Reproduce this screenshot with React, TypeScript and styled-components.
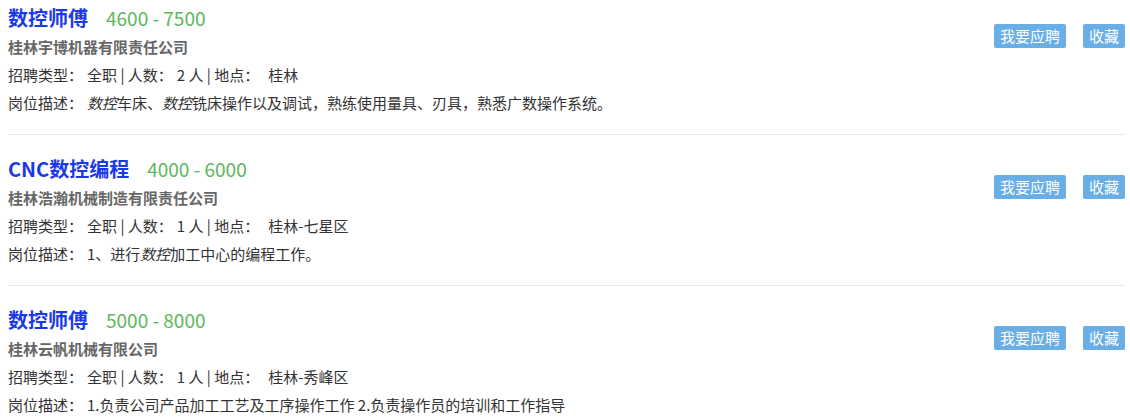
import * as React from "react"
import styled, { createGlobalStyle } from "styled-components"

const GlobalStyle = createGlobalStyle`
  body {
    margin: 0;
    background: #fff;
    font-family: "Noto Sans CJK SC", "Noto Sans", sans-serif;
    color: #333;
  }
`

interface Job {
  title: string
  salary: string
  company: string
  people: number
  place: string
  desc: React.ReactNode
}

const jobs: Job[] = [
  {
    title: "数控师傅",
    salary: "4600 - 7500",
    company: "桂林宇博机器有限责任公司",
    people: 2,
    place: "桂林",
    desc: (
      <>
        <em>数控</em>车床、<em>数控</em>铣床操作以及调试，熟练使用量具、刃具，熟悉广数操作系统。
      </>
    ),
  },
  {
    title: "CNC数控编程",
    salary: "4000 - 6000",
    company: "桂林浩瀚机械制造有限责任公司",
    people: 1,
    place: "桂林-七星区",
    desc: (
      <>
        1、进行<em>数控</em>加工中心的编程工作。
      </>
    ),
  },
  {
    title: "数控师傅",
    salary: "5000 - 8000",
    company: "桂林云帆机械有限公司",
    people: 1,
    place: "桂林-秀峰区",
    desc: <>1.负责公司产品加工工艺及工序操作工作 2.负责操作员的培训和工作指导</>,
  },
]

const List = styled.ul`
  list-style: none;
  margin: -16px 0 0;
  padding: 0 5px 0 8px;
`

const Item = styled.li`
  display: flex;
  justify-content: space-between;
  padding: 15px 0 17px;
  border-bottom: 1px dotted #d6d6d6;
  &:last-child {
    border-bottom: none;
  }
`

const Info = styled.div`
  display: flex;
  flex-direction: column;
`

const Head = styled.div`
  display: flex;
  align-items: baseline;
  height: 38px;
  line-height: 38px;
`

const Title = styled.a`
  font-size: 20px;
  font-weight: 700;
  color: #1a3ae6;
  text-decoration: none;
`

const Salary = styled.span`
  margin-left: 18px;
  font-size: 19px;
  color: #5cb85c;
`

const Company = styled.div`
  height: 20px;
  line-height: 20px;
  margin-bottom: 4px;
  font-size: 15px;
  font-weight: 700;
  color: #666;
`

const Line = styled.div`
  height: 28px;
  line-height: 28px;
  font-size: 15px;
  color: #333;
  white-space: nowrap;
  em {
    font-style: italic;
  }
`

const Value = styled.span<{ $gap: number }>`
  margin-left: ${(p) => p.$gap}px;
`

const Actions = styled.div`
  display: flex;
  gap: 17px;
  margin-top: 25px;
  align-self: flex-start;
`

const Button = styled.button`
  height: 24px;
  padding: 0 6px;
  border: none;
  border-radius: 2px;
  background: #6aaee6;
  color: #fff;
  font-family: "Noto Sans CJK SC", sans-serif;
  font-size: 15px;
  line-height: 24px;
  cursor: pointer;
`

export default function App() {
  return (
    <>
      <GlobalStyle />
      <List>
        {jobs.map((job, i) => (
          <Item key={i}>
            <Info>
              <Head>
                <Title href="#">{job.title}</Title>
                <Salary>{job.salary}</Salary>
              </Head>
              <Company>{job.company}</Company>
              <Line>
                招聘类型：<Value $gap={4}>全职</Value> | 人数：<Value $gap={4}>{job.people}</Value> 人 | 地点：
                <Value $gap={9}>{job.place}</Value>
              </Line>
              <Line>
                岗位描述：<Value $gap={4}>{job.desc}</Value>
              </Line>
            </Info>
            <Actions>
              <Button>我要应聘</Button>
              <Button>收藏</Button>
            </Actions>
          </Item>
        ))}
      </List>
    </>
  )
}
